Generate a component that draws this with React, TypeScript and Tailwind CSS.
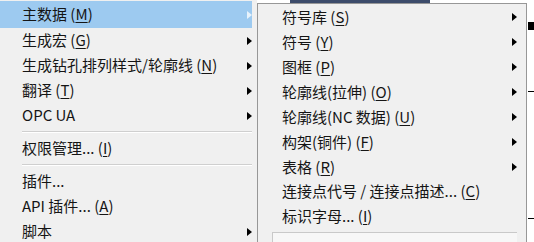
import React from 'react';

type Item = { label: React.ReactNode; arrow?: boolean; active?: boolean };

const U = ({ c }: { c: string }) => <span className="underline underline-offset-2">{c}</span>;

const Arrow = ({ light }: { light?: boolean }) => (
  <span
    className={`block w-0 h-0 border-y-[4px] border-y-transparent border-l-[5px] ${
      light ? 'border-l-[#e8f3fc]' : 'border-l-black'
    }`}
  />
);

const Row = ({ item, left }: { item: Item; left: number }) => (
  <div
    className={`flex items-center justify-between h-[25px] ${item.active ? 'bg-[#9dcaf0]' : ''}`}
    style={{ paddingLeft: left }}
  >
    <span className="whitespace-nowrap">{item.label}</span>
    {item.arrow && <Arrow light={item.active} />}
  </div>
);

const Sep = () => (
  <div className="flex items-center h-[8px] ml-[22px]">
    <div className="w-full border-t border-t-[#cfcfcf] border-b border-b-white" />
  </div>
);

const mainTop: Item[] = [
  { label: <>主数据 (<U c="M" />)</>, arrow: true, active: true },
  { label: <>生成宏 (<U c="G" />)</>, arrow: true },
  { label: <>生成钻孔排列样式/轮廓线 (<U c="N" />)</>, arrow: true },
  { label: <>翻译 (<U c="T" />)</>, arrow: true },
  { label: <>OPC UA</>, arrow: true },
];

const sub: Item[] = [
  { label: <>符号库 (<U c="S" />)</>, arrow: true },
  { label: <>符号 (<U c="Y" />)</>, arrow: true },
  { label: <>图框 (<U c="P" />)</>, arrow: true },
  { label: <>轮廓线(拉伸) (<U c="O" />)</>, arrow: true },
  { label: <>轮廓线(NC 数据) (<U c="U" />)</>, arrow: true },
  { label: <>构架(铜件) (<U c="F" />)</>, arrow: true },
  { label: <>表格 (<U c="R" />)</>, arrow: true },
  { label: <>连接点代号 / 连接点描述... (<U c="C" />)</> },
  { label: <>标识字母... (<U c="I" />)</> },
];

export default function App() {
  return (
    <div
      className="relative flex w-[534px] h-[242px] overflow-hidden bg-white text-[15px] text-[#151515]"
      style={{ fontFamily: '"Noto Sans CJK SC", "Noto Sans", sans-serif' }}
    >
      {/* main menu */}
      <div className="w-[257px] h-full bg-[#f0f0f0] pt-[3px] pr-[5px] shrink-0">
        <div className="-mr-[5px] pr-[5px]">
          {mainTop.map((it, i) => (
            <div key={i} className={i === 0 ? 'h-[27px] -mt-[2px] pt-[1px] bg-[#9dcaf0]' : ''}>
              <Row item={it} left={22} />
            </div>
          ))}
        </div>
        <Sep />
        <Row item={{ label: <>权限管理... (<U c="I" />)</> }} left={22} />
        <Sep />
        <Row item={{ label: <>插件...</> }} left={22} />
        <Row item={{ label: <>API 插件... (<U c="A" />)</> }} left={22} />
        <Row item={{ label: <>脚本</>, arrow: true }} left={22} />
      </div>

      {/* sub menu */}
      <div className="relative flex flex-col mt-[3px] w-[270px] h-[250px] shrink-0 bg-[#f0f0f0] border border-[#979797] pt-[1px] pr-[9px]">
        {sub.map((it, i) => (
          <Row key={i} item={it} left={24} />
        ))}
        <div className="ml-[14px] mt-[3px] h-[20px] border-t border-l border-[#c9c9c9] bg-[#f7f7f7]" />
      </div>

      {/* background canvas behind the menus */}
      <div className="absolute left-[290px] top-0 w-[140px] h-[3px] bg-[#3d4c6b]" />
      <div className="absolute left-[528px] top-[22px] w-[6px] h-[8px] bg-black" />
      <div className="absolute left-[528px] top-[91px] w-[6px] h-px bg-black" />
      <div className="absolute left-[528px] top-[218px] w-[6px] h-px bg-black" />
    </div>
  );
}
